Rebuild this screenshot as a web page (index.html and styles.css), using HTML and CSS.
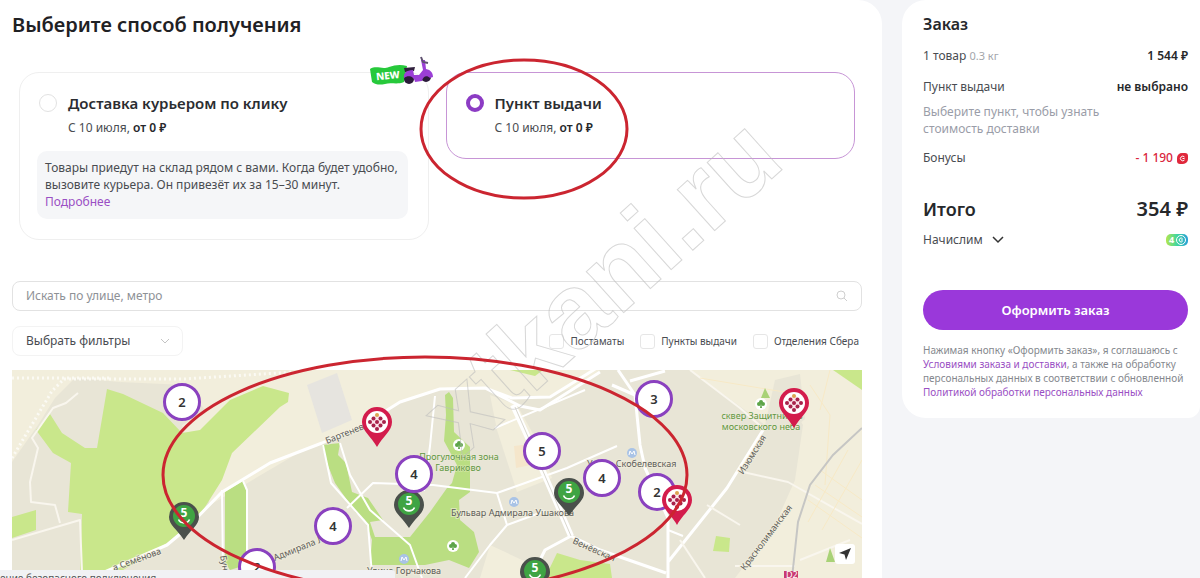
FILE: index.html
```html
<!DOCTYPE html>
<html lang="ru">
<head>
    <meta charset="UTF-8">
    <meta name="viewport" content="width=device-width, initial-scale=1.0">
    <title>Оформление заказа</title>
    <link rel="stylesheet" href="styles.css">
</head>
<body>
<!-- Shared symbols for the map pins -->
<svg class="symbols" aria-hidden="true">
    <symbol id="pin-red" viewBox="0 0 32 40">
        <path fill="#d31c4c" d="M16 0a15 15 0 0 1 15 15c0 9-9 14-15 25C10 29 1 24 1 15A15 15 0 0 1 16 0z"/>
        <circle cx="16" cy="15" r="11" fill="#fff"/>
        <path d="M16 6l9 9-9 9-9-9z" fill="#fbe3e9"/>
        <g fill="#a8224a">
            <circle cx="12.500" cy="11.500" r="2"/>
            <circle cx="19.500" cy="11.500" r="2"/>
            <circle cx="9" cy="15" r="2"/>
            <circle cx="16" cy="15" r="2"/>
            <circle cx="23" cy="15" r="2"/>
            <circle cx="12.500" cy="18.500" r="2"/>
            <circle cx="19.500" cy="18.500" r="2"/>
            <circle cx="16" cy="22" r="2"/>
        </g>
        <circle cx="16" cy="8" r="2" fill="#dda552"/>
    </symbol>
    <symbol id="pin-green" viewBox="0 0 32 40">
        <path fill="#4a504b" d="M16 1a15 15 0 0 1 15 15c0 8-8 12-15 23C9 28 1 24 1 16A15 15 0 0 1 16 1z"/>
        <circle cx="16" cy="15" r="11" fill="#3fa443"/>
        <path d="M10.500 18.500c2 4.500 9 4.500 11 0" fill="none" stroke="#fff" stroke-width="1.600"/>
    </symbol>
</svg>

<div class="page">
    <main class="main">
        <h1>Выберите способ получения</h1>

        <div class="methods">
            <div class="method">
                <label class="method-label">
                    <input type="radio" name="method" class="radio">
                    <span class="method-title">Доставка курьером по клику</span>
                    <span class="method-sub">С 10 июля, <b>от 0 ₽</b></span>
                </label>
                <p class="info">Товары приедут на склад рядом с вами. Когда будет удобно, вызовите курьера. Он привезёт их за 15–30 минут.<br><a href="#">Подробнее</a></p>
                <svg class="scooter" viewBox="0 0 64 32" role="img" aria-label="NEW">
                    <path d="M1 13c7-4 12 1 19-2 6-2 11-3 18-1l-3 16c-7 3-13 0-19 2-5 1-9 1-13-2z" fill="#27c93b"/>
                    <path d="M35 12l11-1-1 4-9 1z" fill="#30203c"/>
                    <circle cx="40" cy="23" r="5" fill="#2b1b3a"/>
                    <circle cx="57" cy="21" r="5" fill="#2b1b3a"/>
                    <path d="M35 22c-1-4 2-8 9-8l1 5h5l4-5-2-10h4l1 9c5 1 7 4 7 8l-3 1c-3-3-7-2-8 3l-7 1c-1-6-7-7-11-4z" fill="#9b3fd6"/>
                    <path d="M52 1l2 5 5 1" fill="none" stroke="#5f5270" stroke-width="2"/>
                    <text x="7" y="23" class="scooter-text" transform="rotate(-6 20 20)">NEW</text>
                </svg>
            </div>
            <div class="method method-active">
                <label class="method-label">
                    <input type="radio" name="method" class="radio" checked>
                    <span class="method-title">Пункт выдачи</span>
                    <span class="method-sub">С 10 июля, <b>от 0 ₽</b></span>
                </label>
            </div>
        </div>

        <div class="search">
            <input type="text" placeholder="Искать по улице, метро" aria-label="Искать по улице, метро">
            <svg width="12" height="12" viewBox="0 0 12 12" fill="none" stroke="#cfcfcf"><circle cx="5" cy="5" r="4"/><path d="M8 8l3 3"/></svg>
        </div>

        <div class="filters">
            <div class="select">
                <select aria-label="Выбрать фильтры">
                    <option>Выбрать фильтры</option>
                </select>
                <svg width="10" height="6" viewBox="0 0 10 6" fill="none" stroke="#c4c4c4"><path d="M1 1l4 4 4-4"/></svg>
            </div>
            <div class="checks">
                <label><input type="checkbox">Постаматы</label>
                <label><input type="checkbox">Пункты выдачи</label>
                <label><input type="checkbox">Отделения Сбера</label>
            </div>
        </div>

        <div class="map">
            <svg class="map-base" viewBox="12 370 850 208" preserveAspectRatio="xMinYMin slice">
                <rect x="12" y="370" width="850" height="208" fill="#e8e5d6"/>
                <!-- light blocks -->
                <g fill="#f2eedc">
                    <path d="M12 370H600L575 387 545 397 510 396 485 388 440 389 400 402 365 424 300 452 210 505 180 420 120 382 75 378 55 398 38 425 12 462z"/>
                    <path d="M690 370H862V578H735L775 525 795 480 803 425 795 412 765 425 745 410z"/>
                    <path d="M490 395l27 10 25 45 10 28-35 14-20-62z"/>
                    <path d="M490 545l60 28-10 5h-60z"/>
                </g>
                <path d="M120 382l65 3 20 25-30 20-30-25z" fill="#e8e5d6"/>
                <path d="M765 425l10-45 25-6 5 45-12 10z" fill="#e8e5d6"/>
                <path d="M307 385l30-12 15 47-30 13z" fill="#e6e4df"/>
                <path d="M514 446l16-2 6 20-20 4z" fill="#f5e6cb"/>
                <!-- parks -->
                <g fill="#c9e78b">
                    <path d="M107 389l16 5 40 19 19 20 18-3 30-30 33-14 26 7-1 9-8 5-48 46-10 27-22 35-33 28-57 35H80l2-64-14-2 3-49-18-10-17-23 14-16 12 19 23 15h12z"/>
                    <path d="M12 517l24-7v20l-24 8z"/>
                    <path d="M510 370h33l-8 6z"/>
                    <path d="M833 370h29v20z"/>
                    <path d="M716 536l14 2-1 14-16-1z"/>
                    <path d="M545 578l12-25 23 7 30 4 2 14z"/>
                </g>
                <g fill="#bade82">
                    <path d="M225 492l18-11 3 9v75l-16 5-5-8z"/>
                    <path d="M322 445l18-2-2 12 8 8 6 29 16 6 15 22-13 2 5 15h35l20-25 17-24 5-5 5-18-13-24 2-26-1-20 4-3 4 6 1 34 16 15v45l-11 8 1 20 14 12 5 20-10 16-20-8-24 5H370l2-25-7-20-9-7-9-13-12-17-8-20z"/>
                </g>
                <!-- roads -->
                <g fill="none" stroke="#fff" stroke-linejoin="round">
                    <path stroke-width="3" d="M100 574l67-29 18-15 37-38 48-29 52-20 43-19 35-22 40-13 45-1 27 10 38-1 50-31M485 388l35 18 20 4 60-38"/>
                    <path stroke-width="6" d="M513 405l23 50 35 81"/>
                    <path stroke-width="3" d="M571 536l29 14 66 23M571 536l-26 14-14 28M618 370l17 25 5 50 5 23 23 50v60M635 395l-23-10M630 381l35-10M668 562l59-74 36-58"/>
                    <path stroke-width="2" d="M323 445l8 38 37 42 4 50M340 443l10 32 20 35 40 35 12 33M347 508l26-25 60 2 64 8 70-25 50-22M497 493l10 32 38-14M465 578l25-33 17-20M435 396l-5 50-6 45M222 490l1 80M243 481l4 9v75M495 428l90-38M668 530l15 6"/>
                    <path stroke-width="2" stroke="#f9f6ee" d="M78 393l-12 10-13 5-21 30 6 10-8 34 1 20 24 3 5 18M12 540l68-20 2 52M690 370l50 38 25 22M743 472l45 10 74 42M707 505l33 20M680 540l25 38M735 566h60M800 560l20-8 30-12"/>
                    <path stroke="#f7e9c6" d="M810 385l20 30-5 70M820 470l42 30M815 485l47 32M808 500l54 38M862 460l-40 70M848 450l-40 72M830 370l-10 40M700 378l90 15"/>
                    <path stroke-width="3" stroke="#fbfaf4" stroke-dasharray="2 3" d="M12 458l40-67 12-12h120l110-7M12 378h100"/>
                </g>
                <path d="M536 455L515 407M571 536l-35-81" stroke="#d9d7cf" fill="none"/>
                <path d="M862 428l-29 27-23 30-12 37-6 56" fill="none" stroke="#c6c6c4" stroke-width="2"/>
                <!-- park trees and metro signs -->
                <g fill="#fff">
                    <circle cx="459" cy="445" r="6"/><circle cx="453" cy="546" r="6"/><circle cx="761" cy="404" r="6"/>
                </g>
                <g fill="#5da549">
                    <path d="M765 388l5 10h-9zM830 548l5 14h-9z" fill="#a9d277"/>
                    <circle cx="459" cy="443" r="2"/><circle cx="457" cy="445" r="2"/><circle cx="461" cy="445" r="2"/><path d="M459 443l1 6h-2z"/>
                    <circle cx="453" cy="544" r="2"/><circle cx="451" cy="546" r="2"/><circle cx="455" cy="546" r="2"/><path d="M453 544l1 6h-2z"/>
                    <circle cx="761" cy="402" r="2"/><circle cx="759" cy="404" r="2"/><circle cx="763" cy="404" r="2"/><path d="M761 402l1 6h-2z"/>
                </g>
                <g fill="#a9c3e6">
                    <circle cx="514" cy="502" r="5"/><circle cx="632" cy="453" r="5"/><circle cx="404" cy="559" r="5"/>
                </g>
                <path d="M511 504l1-4 2 3 2-3 1 4M629 455l1-4 2 3 2-3 1 4M401 561l1-4 2 3 2-3 1 4" fill="none" stroke="#fff"/>
                <rect x="784" y="571" width="14" height="9" fill="#c93a72"/>
                <g class="map-text">
                    <text x="327" y="444" transform="rotate(-22 327 444)">Бартеневская</text>
                    <text x="114" y="571" transform="rotate(-20 114 571)">а Семёнова</text>
                    <text x="220" y="556" transform="rotate(80 220 556)">Бунинская</text>
                    <text x="275" y="561" transform="rotate(-22 275 561)">Адмирала Л</text>
                    <text x="451" y="516">Бульвар Адмирала Ушакова</text>
                    <text x="367" y="574">Улица Горчакова</text>
                    <text x="587" y="467">Улица Скобелевская</text>
                    <text x="572" y="543" transform="rotate(24 572 543)">Венёвская</text>
                    <text x="743" y="475" transform="rotate(-58 743 475)">Изюмская</text>
                    <text x="745" y="571" transform="rotate(-53 745 571)">Краснолиманская</text>
                    <g class="map-park">
                        <text x="459" y="460">Прогулочная зона</text>
                        <text x="458" y="471">Гавриково</text>
                        <text x="762" y="419">сквер Защитников</text>
                        <text x="761" y="430">московского неба</text>
                    </g>
                    <text x="786" y="578" class="map-line">D2</text>
                </g>
            </svg>

            <button class="pin" style="left: 172px; top: 147px"><svg><use href="#pin-green"/></svg><span>5</span></button>
            <button class="pin" style="left: 397px; top: 135px"><svg><use href="#pin-green"/></svg><span>5</span></button>
            <button class="pin" style="left: 557px; top: 123px"><svg><use href="#pin-green"/></svg><span>5</span></button>
            <button class="pin" style="left: 523px; top: 202px"><svg><use href="#pin-green"/></svg><span>5</span></button>
            <button class="cluster" style="left: 170px; top: 32px">2</button>
            <button class="cluster" style="left: 402px; top: 104px">4</button>
            <button class="cluster" style="left: 321px; top: 156px">4</button>
            <button class="cluster" style="left: 245px; top: 197px">2</button>
            <button class="cluster" style="left: 530px; top: 81px">5</button>
            <button class="cluster" style="left: 590px; top: 108px">4</button>
            <button class="cluster" style="left: 642px; top: 29px">3</button>
            <button class="cluster" style="left: 645px; top: 122px">2</button>
            <button class="pin" style="left: 365px; top: 53px" aria-label="Пункт выдачи"><svg><use href="#pin-red"/></svg></button>
            <button class="pin" style="left: 782px; top: 34px" aria-label="Пункт выдачи"><svg><use href="#pin-red"/></svg></button>
            <button class="pin" style="left: 665px; top: 131px" aria-label="Пункт выдачи"><svg><use href="#pin-red"/></svg></button>
            <button class="locate" aria-label="Моё местоположение">
                <svg width="12" height="12" viewBox="0 0 12 12"><path d="M12 0L7 12 5.500 6.500 0 5z" fill="#333"/></svg>
            </button>
        </div>
    </main>

    <aside class="order">
        <h2>Заказ</h2>
        <div class="row row-goods"><span>1 товар <small>0.3 кг</small></span><b>1 544 ₽</b></div>
        <div class="row"><span>Пункт выдачи</span><b>не выбрано</b></div>
        <p class="note">Выберите пункт, чтобы узнать стоимость доставки</p>
        <div class="row row-bonus">
            <span>Бонусы</span>
            <span class="minus">- 1 190
                <svg width="11" height="11" viewBox="0 0 11 11"><path d="M5 0h3a3 3 0 0 1 3 3v3a5 5 0 0 1-5 5H3a3 3 0 0 1-3-3V5a5 5 0 0 1 5-5z" fill="#e0283c"/><path d="M7.500 4a2.300 2.300 0 1 0 0 3M5.500 5.500h2" fill="none" stroke="#fff"/></svg>
            </span>
        </div>
        <div class="row total"><span>Итого</span><b>354 ₽</b></div>
        <div class="row row-accrue">
            <button class="accrue">Начислим
                <svg width="12" height="8" viewBox="0 0 12 8" fill="none" stroke="#333" stroke-width="1.500"><path d="M1 1l5 5 5-5"/></svg>
            </button>
            <svg width="22" height="12" viewBox="0 0 22 12" role="img" aria-label="4 бонуса">
                <defs><linearGradient id="bonus"><stop offset="0" stop-color="#b4e64e"/><stop offset=".5" stop-color="#3fd6a0"/><stop offset="1" stop-color="#2a9fd8"/></linearGradient></defs>
                <rect width="22" height="12" rx="5" fill="url(#bonus)"/>
                <text x="3" y="9" class="bonus-text">4</text>
                <circle cx="15" cy="6" r="4.500" fill="none" stroke="#fff"/>
                <path d="M16.500 4.500a2 2 0 1 0 0 3M15 6h2" fill="none" stroke="#fff"/>
            </svg>
        </div>
        <button class="submit">Оформить заказ</button>
        <p class="legal">Нажимая кнопку «Оформить заказ», я соглашаюсь с <a href="#">Условиями заказа и доставки</a>, а также на обработку персональных данных в соответствии с обновленной <a href="#">Политикой обработки персональных данных</a></p>
    </aside>
</div>

<div class="status">ение безопасного подключения...</div>

<svg class="marks" width="1200" height="578" aria-hidden="true">
    <text x="462" y="458" transform="rotate(-42 462 458)">xtkani.ru</text>
    <ellipse cx="524" cy="129" rx="103" ry="69"/>
    <ellipse cx="425" cy="475" rx="262" ry="118"/>
</svg>
</body>
</html>
```
FILE: styles.css
```css
* {
    margin: 0;
    padding: 0;
    box-sizing: border-box;
}

body {
    font-family: 'Noto Sans', 'Open Sans', sans-serif;
    font-size: 12px;
    line-height: 16px;
    color: #494c51;
    background: #f4f5f8;
    overflow: hidden;
}

button,
input,
select {
    font: inherit;
    color: inherit;
    border: none;
    background: none;
}

button {
    cursor: pointer;
}

a {
    color: #9a4fc4;
    text-decoration: none;
}

b {
    font-weight: 600;
    color: #26282b;
}

.symbols {
    position: absolute;
    width: 0;
    height: 0;
}

.page {
    display: flex;
    align-items: flex-start;
    gap: 20px;
    height: 100vh;
}

.main {
    flex: 1;
    min-width: 0;
    height: 100%;
    display: flex;
    flex-direction: column;
    padding: 11px 20px 0 12px;
    background: #fff;
    border-radius: 0 24px 0 0;
}

h1 {
    font-size: 20px;
    line-height: 28px;
    font-weight: 600;
    color: #1f2124;
    margin-bottom: 33px;
}

/* Delivery methods */
.methods {
    display: grid;
    grid-template-columns: 1fr 1fr;
    align-items: start;
    gap: 17px;
    padding: 0 7px;
    margin-bottom: 41px;
}

.method {
    position: relative;
    padding: 18px 20px 20px 17px;
    border: 1px solid #efefef;
    border-radius: 20px;
}

.method-active {
    border-color: #c795d6;
}

.method-label {
    display: grid;
    grid-template-columns: 18px 1fr;
    column-gap: 11px;
    row-gap: 3px;
    align-items: center;
    padding-left: 2px;
}

.radio {
    appearance: none;
    width: 18px;
    height: 18px;
    border: 1px solid #e2e2e2;
    border-radius: 50%;
}

.radio:checked {
    border: 4px solid #8c3cc4;
}

.method-title {
    font-size: 15px;
    line-height: 24px;
    font-weight: 600;
    color: #2b2d31;
}

.method-sub {
    grid-column: 2;
    line-height: 20px;
}

.info {
    margin-top: 13px;
    padding: 8px 8px 9px;
    line-height: 17px;
    background: #f5f6f8;
    border-radius: 10px;
}

.scooter {
    position: absolute;
    top: -17px;
    right: -5px;
    width: 64px;
    height: 32px;
}

.scooter-text {
    font-size: 10px;
    font-weight: 800;
    fill: #fff;
}

/* Search and filters */
.search {
    display: flex;
    align-items: center;
    height: 30px;
    padding: 0 13px;
    margin-bottom: 15px;
    border: 1px solid #e2e2e2;
    border-radius: 8px;
}

.search input {
    flex: 1;
    outline: none;
}

.search input::placeholder {
    color: #8e9196;
}

.filters {
    display: flex;
    justify-content: space-between;
    align-items: center;
    margin-bottom: 14px;
}

.select {
    display: flex;
    align-items: center;
    width: 171px;
    height: 30px;
    padding: 0 12px 0 13px;
    border: 1px solid #f3f3f3;
    border-radius: 8px;
}

.select select {
    flex: 1;
    appearance: none;
}

.checks {
    display: flex;
    gap: 16px;
    padding-right: 3px;
    font-size: 10px;
}

.checks label {
    display: flex;
    align-items: center;
    gap: 6px;
}

.checks input {
    appearance: none;
    width: 15px;
    height: 15px;
    border: 1px solid #e6e6e6;
    border-radius: 3px;
}

/* Map */
.map {
    position: relative;
    flex: 1;
    min-height: 200px;
    overflow: hidden;
}

.map-base {
    display: block;
    width: 100%;
    height: 100%;
}

.map-text {
    font-size: 9px;
    fill: #5d5d5a;
    stroke: #f2eedc;
    stroke-width: 2px;
    stroke-opacity: 0.6;
    paint-order: stroke;
}

.map-park {
    fill: #5f9742;
    stroke-width: 1px;
    text-anchor: middle;
}

.map-line {
    fill: #fff;
    stroke: none;
}

.cluster {
    position: absolute;
    width: 38px;
    height: 38px;
    font-size: 13px;
    font-weight: 600;
    color: #333;
    background: #fff;
    border: 3px solid #8a41bf;
    border-radius: 50%;
    transform: translate(-50%, -50%);
}

.pin {
    position: absolute;
    width: 32px;
    height: 40px;
    transform: translate(-50%, -16px);
}

.pin svg {
    display: block;
    width: 32px;
    height: 40px;
}

.pin span {
    position: absolute;
    top: 4px;
    left: 0;
    width: 100%;
    font-weight: 700;
    color: #fff;
}

.locate {
    position: absolute;
    top: 174px;
    right: 7px;
    width: 20px;
    height: 20px;
    display: flex;
    align-items: center;
    justify-content: center;
    background: #fff;
    border-radius: 3px;
}

/* Order summary */
.order {
    width: 298px;
    padding: 12px 12px 19px 21px;
    background: #fff;
    border-radius: 24px 0 12px 24px;
}

h2 {
    font-size: 16px;
    line-height: 24px;
    font-weight: 600;
    color: #26282b;
    margin-bottom: 12px;
}

.row {
    display: flex;
    align-items: center;
    justify-content: space-between;
}

.row-goods {
    margin-bottom: 15px;
}

.row small {
    font-size: 11px;
    color: #a3a6ab;
}

.note {
    width: 190px;
    margin: 8px 0 13px;
    line-height: 17px;
    color: #9a9da8;
}

.row-bonus {
    margin-bottom: 31px;
}

.minus {
    display: flex;
    align-items: center;
    gap: 4px;
    font-weight: 500;
    color: #d9263c;
}

.total {
    margin-bottom: 11px;
    font-size: 18px;
    line-height: 24px;
    font-weight: 600;
    color: #26282b;
}

.total b {
    font-size: 20px;
}

.accrue {
    display: flex;
    align-items: center;
    gap: 9px;
}

.bonus-text {
    font-size: 9px;
    font-weight: 700;
    fill: #fff;
}

.submit {
    display: block;
    width: 100%;
    height: 40px;
    margin: 42px 0 13px;
    font-size: 13px;
    font-weight: 600;
    color: #fff;
    background: #9a38da;
    border-radius: 20px;
}

.legal {
    font-size: 10px;
    line-height: 14px;
    color: #85888e;
}

/* Browser status line at the bottom edge */
.status {
    position: fixed;
    left: 0;
    bottom: 0;
    width: 395px;
    height: 8px;
    padding-top: 1px;
    font-size: 10px;
    line-height: 14px;
    color: #555;
    background: #f1f2f4;
    border-radius: 0 3px 0 0;
    overflow: hidden;
}

/* Hand-drawn marks and watermark over the page */
.marks {
    position: fixed;
    top: 0;
    left: 0;
    fill: none;
    pointer-events: none;
}

.marks text {
    font-family: 'Liberation Sans', Arial, sans-serif;
    font-size: 105px;
    font-weight: 700;
    stroke: #bdbdbd;
    stroke-opacity: 0.6;
}

.marks ellipse {
    stroke: #cb2530;
    stroke-width: 3px;
}
```
